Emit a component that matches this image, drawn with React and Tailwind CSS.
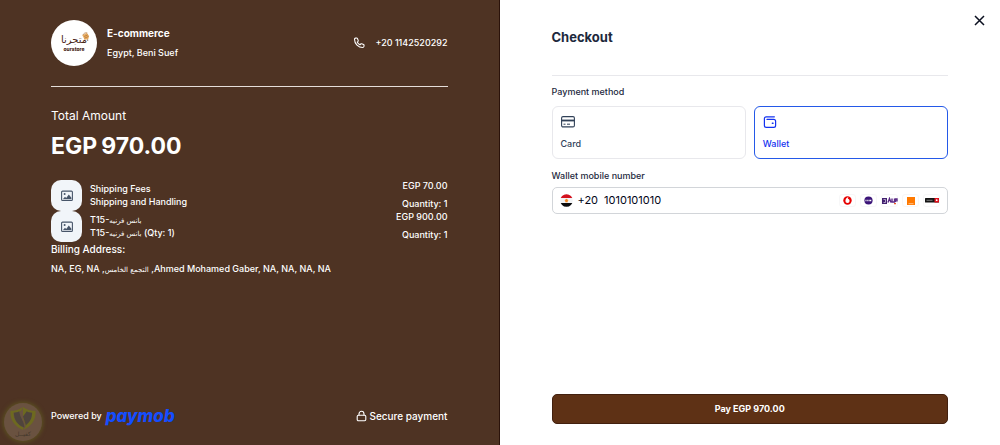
import { useState } from 'react'

const ITEMS = [
  { id: 1, name: 'Shipping Fees', description: 'Shipping and Handling', price: 'EGP 70.00', quantity: 1 },
  { id: 2, name: 'T15-', nameAr: 'بانس فرنيه', description: 'T15-', descriptionAr: 'بانس فرنيه', suffix: ' (Qty: 1)', price: 'EGP 900.00', quantity: 1 },
]

const METHODS = [
  { id: 'card', label: 'Card', Icon: CardIcon },
  { id: 'wallet', label: 'Wallet', Icon: WalletIcon },
]

function CardIcon() {
  return (
    <svg width="14" height="14" viewBox="0 0 14 14" fill="none" stroke="currentColor">
      <rect x="0.6" y="1.6" width="12.8" height="10.3" rx="1.4" strokeWidth="1.1" />
      <path d="M0.6 5.5h12.8" strokeWidth="1.8" />
      <path d="M2.5 9.2h2M6 9.2h3" strokeWidth="1" />
    </svg>
  )
}

function WalletIcon() {
  return (
    <svg width="14" height="14" viewBox="0 0 14 14" fill="none" stroke="currentColor" strokeWidth="1.2" strokeLinecap="round" strokeLinejoin="round">
      <path d="M11.4 1.8H3.2C2 1.8 1.4 2.6 1.4 3.6v6.8c0 1.2.7 1.9 1.9 1.9h7.4c1.2 0 1.9-.7 1.9-1.9V6.3c0-1.2-.7-1.9-1.9-1.9H4" />
      <path d="M9.4 8.3h.6" strokeWidth="1.5" />
    </svg>
  )
}

function PhoneIcon() {
  return (
    <svg width="12" height="12" viewBox="0 0 24 24" fill="none" stroke="currentColor" strokeWidth="2.2" strokeLinejoin="round">
      <path d="M3 4.5C3 3.4 4 2.4 5 2.2l2-.3c.8-.1 1.5.3 1.8 1l1.6 3.8c.3.7.1 1.4-.4 1.9L8.4 10.1c1 2.4 3.1 4.5 5.5 5.5l1.5-1.6c.5-.5 1.2-.7 1.9-.4l3.8 1.6c.7.3 1.1 1 1 1.8l-.3 2c-.2 1-1.2 2-2.3 2C10.7 21 3 13.3 3 4.5z" />
    </svg>
  )
}

function LockIcon() {
  return (
    <svg width="11" height="12" viewBox="0 0 11 12" fill="none" stroke="currentColor" strokeWidth="1.1" strokeLinejoin="round">
      <path d="M3 5.5V4a2.5 2.8 0 0 1 5 0v1.5" />
      <rect x="1.2" y="5.3" width="8.6" height="5.4" rx="1.2" />
    </svg>
  )
}

function ImageIcon() {
  return (
    <svg width="12" height="12" viewBox="0 0 12 12" fill="none">
      <rect x="0.6" y="1.1" width="10.8" height="9.4" rx="1" stroke="#475569" strokeWidth="1.1" />
      <circle cx="3.6" cy="4" r="1" fill="#475569" />
      <path d="M1.8 9.3 4 6.8l1.2 1.1L7.8 4.5l2.6 3.2v1.6z" fill="#475569" />
    </svg>
  )
}

function FlagIcon() {
  return (
    <svg width="13" height="13" viewBox="0 0 13 13" className="shrink-0">
      <clipPath id="flag-clip">
        <circle cx="6.5" cy="6.5" r="6.3" />
      </clipPath>
      <g clipPath="url(#flag-clip)">
        <rect width="13" height="13" fill="#f3f4f6" />
        <rect width="13" height="4" fill="#d3121f" />
        <rect y="9" width="13" height="4" fill="#0b0b0d" />
        <path d="M4.5 6.2 6.5 4.8l2 1.4-.8.6v1.4H5.3V6.8z" fill="#f58a23" />
      </g>
    </svg>
  )
}

// store badge: wordmark with a small basket in the corner
function StoreLogo() {
  return (
    <div className="relative flex size-[46px] shrink-0 flex-col items-center justify-center rounded-full bg-white">
      <span dir="rtl" lang="ar" className="font-['DejaVu_Sans',sans-serif] text-[10px] leading-[12px] text-[#4a2618]">متجرنا</span>
      <span className="text-[5px] leading-[6px] font-extrabold text-[#4a2618]">ourstore</span>
      <svg width="9" height="9" viewBox="0 0 10 10" className="absolute top-3 right-[7px]">
        <path d="M1.5 3.5 6.5 1 9 4.5 8 8 4 8.5z" fill="#e8ad62" />
        <path d="M2 3.5c1-2.2 3-3 5-2.5M3.5 5l4-1.8M4 6.8 8.3 5" fill="none" stroke="#a8662c" strokeWidth="0.7" />
        <circle cx="4" cy="9.3" r="0.6" fill="#4a2618" />
        <circle cx="7.5" cy="9" r="0.6" fill="#4a2618" />
      </svg>
    </div>
  )
}

// faint round stamp in the bottom corner
function Watermark() {
  return (
    <div className="absolute bottom-1 left-1 flex size-[38px] flex-col items-center justify-center rounded-full bg-[#6a5240] shadow-[0_0_4px_1px_#5c5320]">
      <svg width="26" height="23" viewBox="0 0 26 24">
        <path d="M0 4C5 4 9 3 13 0l-2 4C8 6 5 6 3 6c0 7 4 12 10 15v3C4 20-1 13 0 4z" fill="#6d6920" />
        <path d="M26 4C21 4 17 3 13 0v12l3 8-3 4c9-4 14-11 13-20z" fill="#6d6920" />
        <path d="M3.5 6c2.5 0 4-.5 5.5-1.5 1 7 5 10 5.5 17C7 19 3.5 13 3.5 6z" fill="#4f443c" />
        <path d="M22.5 6c-2.5 0-4-.5-5.5-1.5L13 10l3 9c4-3 6.5-7 6.500-13z" fill="#4f443c" />
      </svg>
      <span dir="rtl" lang="ar" className="font-['DejaVu_Sans',sans-serif] text-[6px] leading-[8px] text-[#44382c]">كفيــل</span>
    </div>
  )
}

function PaymobLogo() {
  return (
    <span className="text-[17px] leading-5 font-extrabold text-[#144dff] italic">paymob</span>
  )
}

function WalletBrands() {
  const chip = 'flex h-[13px] w-[17px] items-center justify-center rounded-[3px] border border-[#f7f7f8]'
  return (
    <div className="flex shrink-0 items-center gap-1">
      <span className={chip}>
        <svg width="9" height="9" viewBox="0 0 9 9" className="shrink-0">
          <circle cx="4.5" cy="4.5" r="4.2" fill="#e60000" />
          <path d="M5.6 1C4 1.2 2.4 3 2.4 4.9a2.1 2.1 0 0 0 4.2 0c0-1-.7-1.8-1.8-2.1C4.8 2 5.2 1.4 5.6 1z" fill="#fff" />
        </svg>
      </span>
      <span className={chip}>
        <svg width="9" height="9" viewBox="0 0 9 9" className="shrink-0">
          <circle cx="4.5" cy="4.5" r="4.1" fill="#3b1478" />
          <path d="M1.5 4.5h1M3.3 4.5h1.2M5.3 4.5h2" stroke="#fff" strokeWidth="1.3" />
        </svg>
      </span>
      <span className={chip}>
        <svg width="16" height="8" viewBox="0 0 16 8" className="shrink-0">
          <rect y="1" width="5" height="6" fill="#42216f" />
          <path d="M1.5 2.5h2v3h-2" fill="none" stroke="#cfc3de" strokeWidth="0.8" />
          <path d="M6 5.5 7.5 1.5 9 5.5M10 1.5v3.5h2.5V1.5M13.5 5V2H15v2.5" fill="none" stroke="#5b2a86" strokeWidth="1.4" />
          <path d="M12 6.7h2" stroke="#ef5a28" strokeWidth="1.3" />
        </svg>
      </span>
      <span className={chip}>
        <svg width="8" height="8" viewBox="0 0 8 8" className="shrink-0">
          <rect width="8" height="8" fill="#ff7900" />
          <path d="M1.5 6.7h5" stroke="#ffe0c2" strokeWidth="0.7" />
        </svg>
      </span>
      <span className={chip}>
        <svg width="14" height="5" viewBox="0 0 14 5" className="shrink-0">
          <rect width="14" height="4.5" rx="0.5" fill="#141414" />
          <path d="M1.5 2.3h6" stroke="#8a8a8a" strokeWidth="0.9" />
          <rect x="9.5" width="4.5" height="4.5" rx="0.5" fill="#e3101c" />
          <circle cx="11.7" cy="2.2" r="0.9" fill="#fff" />
        </svg>
      </span>
    </div>
  )
}

function Arabic({ children }) {
  return <span lang="ar" className="font-['DejaVu_Sans',sans-serif] text-[7px] leading-none">{children}</span>
}

function OrderItem({ item }) {
  return (
    <li className="flex h-[31px] items-start gap-2">
      <div className="flex size-[31px] shrink-0 items-center justify-center rounded-[10px] bg-slate-100">
        <ImageIcon />
      </div>
      <div className="min-w-0 flex-1 pt-[2px] text-[9px] leading-[13px] font-medium">
        <p>{item.name}{item.nameAr && <Arabic>{item.nameAr}</Arabic>}</p>
        <p>{item.description}{item.descriptionAr && <Arabic>{item.descriptionAr}</Arabic>}{item.suffix}</p>
      </div>
      <div className="text-right text-[9px] leading-3 font-medium">
        <p>{item.price}</p>
        <p className="mt-[6px]">Quantity: {item.quantity}</p>
      </div>
    </li>
  )
}

function Summary() {
  return (
    <section className="relative flex flex-1 flex-col border-r border-[#2a120a] bg-[#4e3323] px-[51px] pt-5 pb-[19px] text-white">
      <header className="flex items-center justify-between border-b border-[#e5ded9] pb-5">
        <div className="flex items-center gap-[10px]">
          <StoreLogo />
          <div className="text-[9px] leading-[19px] font-medium">
            <h1 className="text-[10px] font-bold">E-commerce</h1>
            <p>Egypt, Beni Suef</p>
          </div>
        </div>
        <div className="flex items-center gap-[10px] text-[9px] font-medium">
          <PhoneIcon />
          <span>+20 1142520292</span>
        </div>
      </header>

      <p className="mt-[21px] text-[12px] leading-4 font-normal">Total Amount</p>
      <p className="mt-[6px] text-[23px] leading-8 font-bold">EGP<span className="ml-1">970.00</span></p>

      <ul className="mt-[18px]">
        {ITEMS.map(item => <OrderItem key={item.id} item={item} />)}
      </ul>

      <h2 className="text-[10px] leading-[14px] font-medium">Billing Address:</h2>
      <p dir="rtl" className="mt-[6px] self-start text-[9px] leading-[13px] font-medium">
        Ahmed Mohamed Gaber, NA, NA, NA, NA, <Arabic>التجمع الخامس</Arabic>, NA, EG, NA
      </p>

      <footer className="mt-auto flex items-center justify-between">
        <div className="flex items-center gap-1 text-[9px] font-medium">
          <span>Powered by</span>
          <PaymobLogo />
        </div>
        <div className="flex items-center gap-[2px] text-[10px] font-medium">
          <LockIcon />
          <span>Secure payment</span>
        </div>
      </footer>
      <Watermark />
    </section>
  )
}

function Checkout() {
  const [method, setMethod] = useState('wallet')
  const [phone, setPhone] = useState('1010101010')

  return (
    <section className="relative flex flex-1 flex-col bg-white px-[52px] pt-[27px] pb-[21px] text-slate-800">
      <button type="button" aria-label="Close" className="absolute top-[15px] right-[15px] text-[#0b1020]">
        <svg width="11" height="11" viewBox="0 0 11 11" fill="none" stroke="currentColor" strokeWidth="1.5">
          <path d="m1 1 9 9M10 1 1 10" />
        </svg>
      </button>

      <h2 className="border-b border-[#e8e8ec] pb-7 text-[13px] leading-5 font-bold">Checkout</h2>

      <fieldset className="mt-[10px]">
        <legend className="text-[9px] leading-3 font-medium">Payment method</legend>
        <div className="mt-2 grid grid-cols-2 gap-2">
          {METHODS.map(({ id, label, Icon }) => (
            <label
              key={id}
              className={`flex h-[53px] cursor-pointer flex-col justify-between rounded-md border p-2 text-[9px] leading-3 font-medium
                ${method === id ? 'border-[#2459e8] text-[#1433f0]' : 'border-[#e8e8ec] text-slate-700'}`}
            >
              <input
                type="radio"
                name="method"
                value={id}
                checked={method === id}
                onChange={() => setMethod(id)}
                className="sr-only"
              />
              <Icon />
              {label}
            </label>
          ))}
        </div>
      </fieldset>

      <label htmlFor="phone" className="mt-[11px] text-[9px] leading-3 font-medium">Wallet mobile number</label>
      <div className="mt-[5px] flex h-[27px] items-center rounded-[5px] border border-[#d2d5d9] px-[7px] text-[11px] text-slate-950">
        <FlagIcon />
        <span className="ml-[5px]">+20</span>
        <input
          id="phone"
          type="tel"
          value={phone}
          onChange={e => setPhone(e.target.value)}
          className="ml-[6px] min-w-0 flex-1 bg-transparent outline-none"
        />
        <WalletBrands />
      </div>

      <button type="button" className="mt-auto h-[30px] rounded-[5px] border border-[#42200f] bg-[#5e3115] text-[9px] font-bold text-white">
        Pay EGP 970.00
      </button>
    </section>
  )
}

export default function App() {
  return (
    <main className="flex min-h-screen font-['Inter',sans-serif]">
      <Summary />
      <Checkout />
    </main>
  )
}
